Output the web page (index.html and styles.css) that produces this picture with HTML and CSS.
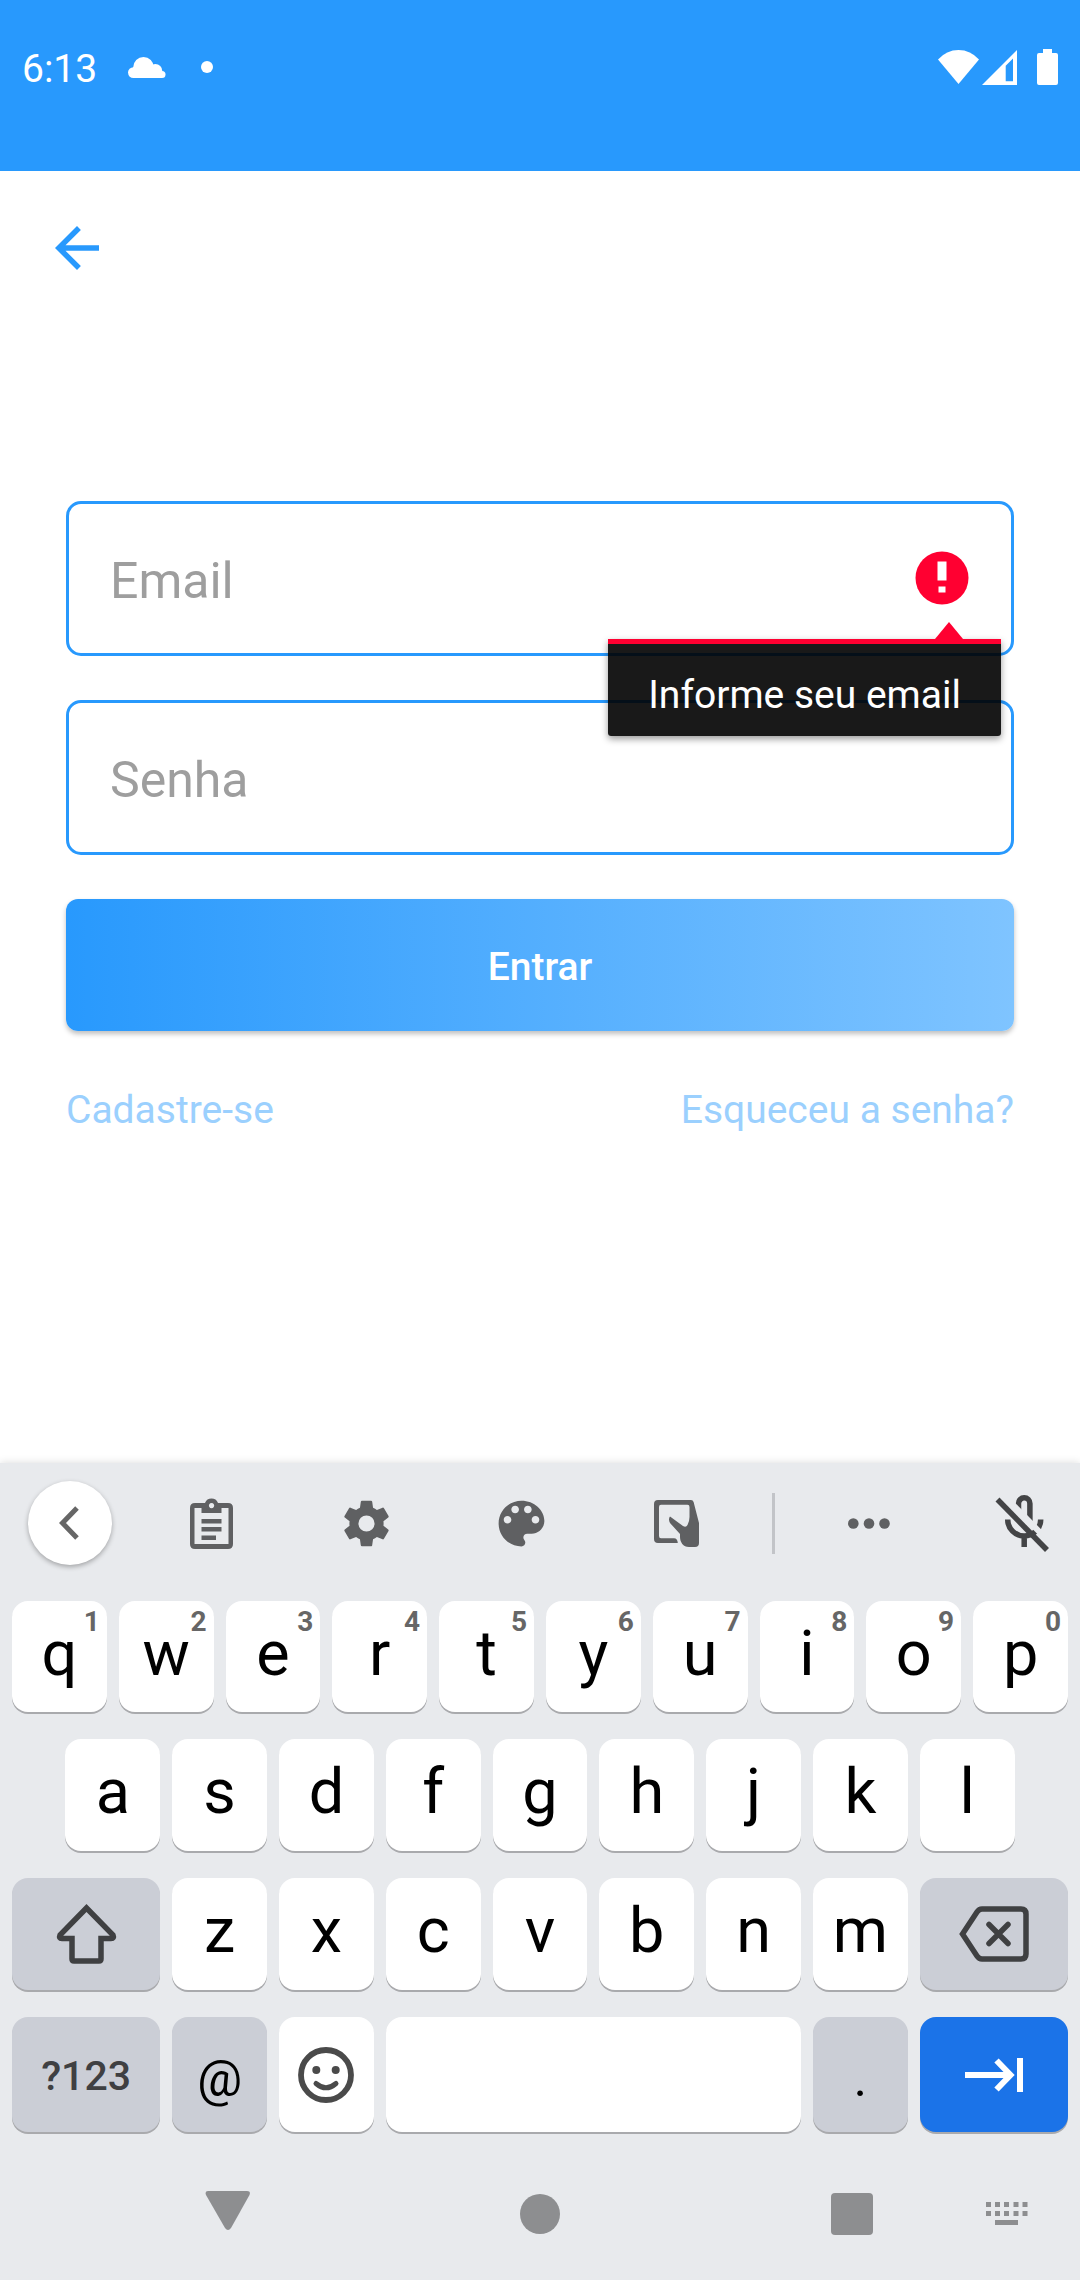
FILE: index.html
```html
<!DOCTYPE html>
<html lang="pt-BR">
<head>
<meta charset="utf-8">
<meta name="viewport" content="width=device-width, initial-scale=1">
<title>Entrar</title>
<link rel="stylesheet" href="styles.css">
</head>
<body>
<header class="status">
  <div class="status-left">
    <time class="clock">6:13</time>
    <svg class="cloud" width="38" height="21" viewBox="0 0 38 21" fill="#fff"><circle cx="15.5" cy="10.3" r="10.3"/><circle cx="27.3" cy="14" r="7"/><circle cx="5.4" cy="15.6" r="5.4"/><circle cx="34" cy="17.5" r="3.5"/><path d="M5 10h25l4 5v6H5z"/></svg>
    <svg width="12" height="12" viewBox="0 0 12 12" fill="#fff"><circle cx="6" cy="6" r="6"/></svg>
  </div>
  <div class="status-right">
    <svg width="41" height="34" viewBox="0 0 41 34" fill="#fff"><path d="M20.500 34L0 9.500Q8.500 0 20.500 0T41 9.500z"/></svg>
    <svg width="35" height="35" viewBox="0 0 35 35" fill="#fff"><path fill-rule="evenodd" d="M0 35L35 0V35zM23.700 31.200H31V8.500L23.700 15.700z"/></svg>
    <svg class="battery" width="21" height="36" viewBox="0 0 21 36" fill="#fff"><path d="M6 0h9v4h4q2 0 2 2v28q0 2-2 2H2q-2 0-2-2V6q0-2 2-2h4z"/></svg>
  </div>
</header>

<main class="page">
  <button class="back" type="button" aria-label="Voltar">
    <svg width="66" height="66" viewBox="0 0 24 24" fill="#2899fd"><path d="M20 11H7.830l5.590-5.590L12 4l-8 8 8 8 1.410-1.410L7.830 13H20v-2z"/></svg>
  </button>
  <form class="login">
    <div class="field">
      <input class="input" type="email" placeholder="Email" aria-label="Email" aria-describedby="email-error">
      <svg class="alert" width="54" height="54" viewBox="0 0 54 54"><circle cx="27" cy="27" r="26.500" fill="#ff0031"/><path d="M22.500 10.500h9v19h-9zM23.500 35.500h7v6h-7z" fill="#fff"/></svg>
      <div class="tip" id="email-error" role="alert">Informe seu email</div>
    </div>
    <div class="field">
      <input class="input" type="password" placeholder="Senha" aria-label="Senha">
    </div>
    <button class="submit" type="button">Entrar</button>
    <nav class="links">
      <a href="#cadastro">Cadastre-se</a>
      <a href="#senha">Esqueceu a senha?</a>
    </nav>
  </form>
</main>

<section class="keyboard" aria-label="Teclado">
  <div class="tools">
    <button class="tool round" type="button" aria-label="Recolher"><svg width="20" height="34" viewBox="0 0 20 34" fill="none" stroke="#666" stroke-width="5"><path d="M18 2L3.500 17 18 32"/></svg></button>
    <button class="tool" type="button" aria-label="Área de transferência"><svg width="43" height="51" viewBox="0 0 43 51" fill="#5f6062"><path fill-rule="evenodd" d="M5 5h10a7 7 0 0 1 13 0h10q5 0 5 5v36q0 5-5 5H5q-5 0-5-5V10q0-5 5-5zM4.500 10v36h34V10h-7v5h-20v-5zM21.500 5a2.600 2.600 0 1 0 .1 0z"/><path d="M11.500 21h20v4.500h-20zM11.500 29h20v4.500h-20zM11.500 37.500H26V42H11.500z"/></svg></button>
    <button class="tool" type="button" aria-label="Configurações"><svg width="57" height="57" viewBox="0 0 24 24" fill="#5f6062"><path d="M19.140 12.940c.04-.3.060-.61.060-.94 0-.32-.02-.64-.07-.94l2.030-1.580c.18-.14.23-.41.12-.61l-1.920-3.320c-.12-.22-.37-.29-.59-.22l-2.390.96c-.5-.38-1.030-.7-1.620-.94l-.36-2.540c-.04-.24-.24-.41-.48-.41h-3.840c-.24 0-.43.17-.47.41l-.36 2.540c-.59.24-1.130.57-1.620.94l-2.390-.96c-.22-.08-.47 0-.59.22L2.740 8.870c-.12.21-.08.47.12.61l2.030 1.580c-.05.3-.09.63-.09.94s.02.64.07.94l-2.030 1.580c-.18.14-.23.41-.12.61l1.920 3.320c.12.22.37.29.59.22l2.390-.96c.5.38 1.030.7 1.620.94l.36 2.540c.05.24.24.41.48.41h3.840c.24 0 .44-.17.47-.41l.36-2.540c.59-.24 1.130-.56 1.620-.94l2.390.96c.22.08.47 0 .59-.22l1.920-3.320c.12-.22.07-.47-.12-.61l-2.010-1.580zM12 15.400a3.400 3.400 0 1 1 0-6.800 3.400 3.400 0 0 1 0 6.800z"/></svg></button>
    <button class="tool" type="button" aria-label="Tema"><svg width="61" height="61" viewBox="0 0 24 24" fill="#5f6062"><path d="M12 3c-4.970 0-9 4.030-9 9s4.030 9 9 9c.83 0 1.500-.67 1.500-1.500 0-.39-.15-.74-.39-1.010-.23-.26-.38-.61-.38-.99 0-.83.67-1.500 1.500-1.500H16c2.760 0 5-2.240 5-5 0-4.420-4.030-8-9-8zm-5.500 9c-.83 0-1.500-.67-1.500-1.500S5.670 9 6.500 9 8 9.670 8 10.500 7.330 12 6.500 12zm3-4C8.670 8 8 7.330 8 6.500S8.670 5 9.500 5s1.500.67 1.500 1.500S10.330 8 9.500 8zm5 0c-.83 0-1.500-.67-1.500-1.500S13.670 5 14.500 5s1.500.67 1.500 1.500S15.330 8 14.500 8zm3 4c-.83 0-1.500-.67-1.500-1.500S16.670 9 17.500 9s1.500.67 1.500 1.500-.67 1.500-1.500 1.500z"/></svg></button>
    <button class="tool" type="button" aria-label="Modo com uma mão"><svg width="45" height="47" viewBox="0 0 45 47" fill="#5f6062"><path d="M4 0H37Q39 0 39.600 2L45 23V43Q45 47 41 47H35C29 47 26 42 26 37V34L16 23Q14 19 16 16.500L29 26Q32 28 33.500 25 35.500 21 35.500 17V7Q35.500 4.700 33.500 4.700H7Q5 4.700 5 7V36Q5 38.300 7 38.300H20Q23.500 38.300 23.800 43H4Q0 43 0 39V4Q0 0 4 0z"/></svg></button>
    <span class="divider"></span>
    <button class="tool" type="button" aria-label="Mais"><svg width="42" height="11" viewBox="0 0 42 11" fill="#5f6062"><circle cx="5.300" cy="5.500" r="5.300"/><circle cx="21" cy="5.500" r="5.300"/><circle cx="36.500" cy="5.500" r="5.300"/></svg></button>
    <button class="tool mic" type="button" aria-label="Microfone desativado"><svg width="54" height="57" viewBox="0 0 54 57" fill="none" stroke="#434446" stroke-width="5.500"><path d="M23.500 16V8.500a5.700 5.700 0 0 1 11.400 0V27M12.700 24.500a16.500 16.500 0 0 0 33 0M29.200 41V52"/><path d="M14 6L50 42.500" stroke="#e8eaed" stroke-width="6"/><path d="M2.500 4.500L52 55"/></svg></button>
  </div>

  <div class="keys">
    <button class="key" type="button">q<span class="hint">1</span></button>
    <button class="key" type="button">w<span class="hint">2</span></button>
    <button class="key" type="button">e<span class="hint">3</span></button>
    <button class="key" type="button">r<span class="hint">4</span></button>
    <button class="key" type="button">t<span class="hint">5</span></button>
    <button class="key" type="button">y<span class="hint">6</span></button>
    <button class="key" type="button">u<span class="hint">7</span></button>
    <button class="key" type="button">i<span class="hint">8</span></button>
    <button class="key" type="button">o<span class="hint">9</span></button>
    <button class="key" type="button">p<span class="hint">0</span></button>
    <button class="key indent" type="button">a</button>
    <button class="key" type="button">s</button>
    <button class="key" type="button">d</button>
    <button class="key" type="button">f</button>
    <button class="key" type="button">g</button>
    <button class="key" type="button">h</button>
    <button class="key" type="button">j</button>
    <button class="key" type="button">k</button>
    <button class="key" type="button">l</button>
    <button class="key wide grey icon" type="button" aria-label="Maiúsculas"><svg width="61" height="61" viewBox="0 0 61 61" fill="none" stroke="#3f4042" stroke-width="5.500"><path d="M30.500 4L4 31Q2.500 34.500 6 34.500H16V55Q16 57 18 57H43Q45 57 45 55V34.500H55Q58.500 34.500 57 31z"/></svg></button>
    <button class="key" type="button">z</button>
    <button class="key" type="button">x</button>
    <button class="key" type="button">c</button>
    <button class="key" type="button">v</button>
    <button class="key" type="button">b</button>
    <button class="key" type="button">n</button>
    <button class="key" type="button">m</button>
    <button class="key wide grey icon" type="button" aria-label="Apagar"><svg width="70" height="56" viewBox="0 0 70 56" fill="none" stroke="#3f4042" stroke-width="5.500"><path d="M3.500 28L18 6Q20 3 23 3H62Q67 3 67 8V48Q67 53 62 53H23Q20 53 18 50z"/><path d="M30 18.500L49 37.500M49 18.500L30 37.500" stroke-linecap="round"/></svg></button>
    <button class="key wide grey symbols" type="button">?123</button>
    <button class="key grey at" type="button">@</button>
    <button class="key icon" type="button" aria-label="Emojis"><svg width="56" height="56" viewBox="0 0 56 56" fill="none" stroke="#4a4a4a" stroke-width="5.800"><circle cx="28" cy="28" r="25"/><path d="M18 36.500Q28 45 38 36.500" stroke-width="5" stroke-linecap="round"/><g fill="#4a4a4a" stroke="none"><circle cx="18.300" cy="23" r="4"/><circle cx="37.700" cy="23" r="4"/></g></svg></button>
    <button class="key space" type="button" aria-label="Espaço"></button>
    <button class="key grey dot" type="button">.</button>
    <button class="key wide next icon" type="button" aria-label="Próximo"><svg width="58" height="34" viewBox="0 0 58 34" fill="none" stroke="#fff" stroke-width="6"><path d="M0 17H45M31.500 2.500L45.500 17 31.500 31.500M55 0V34"/></svg></button>
  </div>

  <nav class="navbar">
    <button class="tool" type="button" aria-label="Voltar"><svg width="46" height="48" viewBox="0 0 46 48" fill="#8d8e90"><path d="M3 1H42Q46 1 44.500 5L26 38Q23 42 20 38L1 5Q-.5 1 3 1z"/></svg></button>
    <button class="tool" type="button" aria-label="Início"><svg width="40" height="40" viewBox="0 0 40 40" fill="#8d8e90"><circle cx="20" cy="20" r="20"/></svg></button>
    <button class="tool recents" type="button" aria-label="Recentes"><svg width="42" height="42" viewBox="0 0 42 42" fill="#8d8e90"><rect width="42" height="42" rx="4"/></svg></button>
    <button class="tool" type="button" aria-label="Trocar teclado"><svg width="42" height="24" viewBox="0 0 42 24" fill="#8d8e90"><path d="M0 0h5v5H0zM9 0h5v5H9zM18 0h5v5h-5zM27.500 0h5v5h-5zM36.500 0h5v5h-5zM0 9h5v5H0zM9 9h5v5H9zM18 9h5v5h-5zM27.500 9h5v5h-5zM36.500 9h5v5h-5zM9 18h23v5H9z"/></svg></button>
  </nav>
</section>
</body>
</html>
```
FILE: styles.css
```css
* {
  box-sizing: border-box;
}

body {
  margin: 0;
  min-height: 100vh;
  display: flex;
  flex-direction: column;
  background: #fff;
  font-family: Roboto, "Liberation Sans", sans-serif;
  font-size: 39px;
}

svg {
  display: block;
}

button {
  margin: 0;
  padding: 0;
  border: 0;
  background: none;
  font: inherit;
  color: inherit;
}

/* Status bar */
.status {
  display: flex;
  justify-content: space-between;
  height: 171px;
  padding: 0 22px;
  background: #2899fd;
  color: #fff;
}

.status-left,
.status-right {
  display: flex;
  align-items: center;
  height: 134px;
}

.status-right {
  gap: 3px;
}

.clock {
  padding-top: 4px;
}

.cloud {
  margin: 0 35px 0 31px;
}

.battery {
  margin-left: 17px;
}

/* Login */
.page {
  flex: 1;
}

.back {
  display: block;
  margin: 44px 0 0 44px;
}

.login {
  display: flex;
  flex-direction: column;
  gap: 44px;
  margin: 220px 66px 0;
}

.field {
  position: relative;
}

.input {
  display: block;
  width: 100%;
  height: 155px;
  padding: 4px 120px 0 41px;
  border: 3px solid #2899fd;
  border-radius: 15px;
  background: none;
  font: inherit;
  font-size: 50px;
  outline: 0;
}

.input::placeholder {
  color: #9e9e9e;
  opacity: 1;
}

.alert {
  position: absolute;
  top: 50px;
  right: 45px;
}

.tip {
  position: absolute;
  z-index: 1;
  top: 138px;
  right: 13px;
  padding: 30px 40px 20px;
  border-top: 5px solid #ff0031;
  border-radius: 0 0 3px 3px;
  background: rgba(0, 0, 0, 0.9);
  background-clip: padding-box;
  box-shadow: 0 3px 7px rgba(0, 0, 0, 0.4);
  color: #fff;
  line-height: 42px;
  white-space: nowrap;
}

.tip::before {
  content: "";
  position: absolute;
  right: 38px;
  bottom: 100%;
  margin-bottom: 5px;
  border: 14px solid transparent;
  border-top: 0;
  border-bottom: 17px solid #ff0031;
}

.submit {
  height: 132px;
  padding-top: 4px;
  border-radius: 12px;
  background: linear-gradient(90deg, #2899fd, #7fc4ff);
  box-shadow: 0 3px 5px rgba(0, 0, 0, 0.25);
  color: #fff;
  font-weight: 500;
}

.links {
  display: flex;
  justify-content: space-between;
  margin-top: 12px;
}

.links a {
  color: #9bd0fe;
  text-decoration: none;
}

/* Keyboard */
.keyboard {
  background: #e8eaed;
  box-shadow: 0 0 8px rgba(0, 0, 0, 0.15);
}

.tools {
  display: grid;
  grid-template-columns: 134fr 155fr 155fr 155fr 155fr 38fr 153fr 135fr;
  align-items: center;
  height: 138px;
  padding-bottom: 18px;
}

.tool {
  display: flex;
  align-items: center;
  justify-content: center;
}

.round {
  width: 84px;
  height: 84px;
  margin-left: 28px;
  padding-right: 2px;
  border-radius: 50%;
  background: #fff;
  box-shadow: 0 2px 5px rgba(0, 0, 0, 0.3);
}

.divider {
  justify-self: center;
  width: 3px;
  height: 61px;
  background: #c2c4c8;
}

.mic {
  padding-left: 18px;
}

.keys {
  display: grid;
  grid-template-columns: repeat(20, minmax(0, 1fr));
  grid-template-rows: 111px 112px 112px 115px;
  gap: 27px 12px;
  padding: 0 12px;
}

.key {
  position: relative;
  grid-column-end: span 2;
  padding-bottom: 6px;
  border-radius: 16px;
  background: #fff;
  box-shadow: 0 2px 0 #a9aaad;
  color: #000;
  font-size: 63px;
  line-height: 74px;
}

.indent {
  grid-column-start: 2;
}

.wide {
  grid-column-end: span 3;
}

.space {
  grid-column-end: span 8;
}

.grey {
  background: #cbced6;
}

.icon {
  display: flex;
  align-items: center;
  justify-content: center;
  padding: 0;
}

.next {
  background: #1b73e8;
}

.symbols {
  padding: 2px 0 0;
  color: #3f4042;
  font-size: 41px;
  font-weight: 500;
}

.at,
.dot {
  padding: 8px 0 0;
  font-size: 50px;
}

.hint {
  position: absolute;
  top: 5px;
  right: 7px;
  color: #666;
  font-size: 28px;
  font-weight: 700;
  line-height: 32px;
}

/* System navigation */
.navbar {
  display: grid;
  grid-template-columns: 456fr 168fr 146fr 164fr 146fr;
  align-items: center;
  height: 148px;
  padding-top: 16px;
}

.recents {
  grid-column-start: 4;
}
```
